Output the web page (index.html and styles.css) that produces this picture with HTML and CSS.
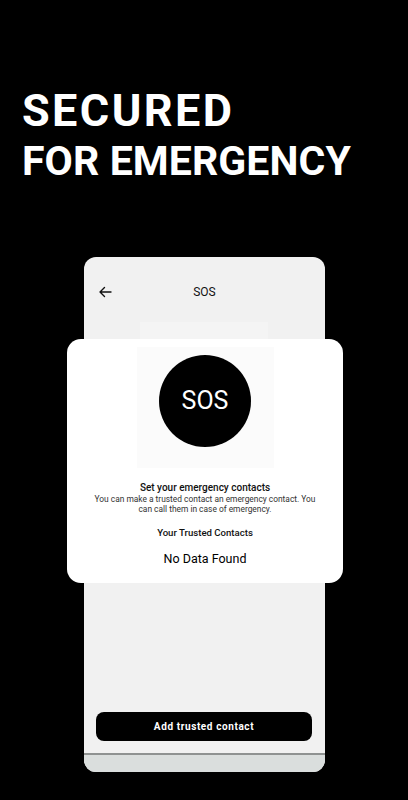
FILE: index.html
```html
<!DOCTYPE html>
<html lang="en">
<head>
    <meta charset="UTF-8">
    <meta name="viewport" content="width=device-width, initial-scale=1.0">
    <title>SOS - Secured for emergency</title>
    <link rel="stylesheet" href="styles.css">
</head>
<body>
    <div class="headline">
        <div class="headline-line big">SECURED</div>
        <div class="headline-line">FOR EMERGENCY</div>
    </div>

    <div class="stage">
        <div class="phone">
            <div class="appbar">
                <svg class="back-icon" width="14" height="12" viewBox="0 0 14 12">
                    <path d="M13 6H2M6.5 1.5L2 6l4.5 4.5" fill="none" stroke="#111" stroke-width="1.4" stroke-linecap="round" stroke-linejoin="round"/>
                </svg>
                <span class="appbar-title">SOS</span>
            </div>
            <div class="placeholder"></div>
            <div class="spacer"></div>
            <button class="add-button">Add trusted contact</button>
            <div class="phone-bottom"></div>
        </div>

        <!-- card zoomed out over the phone -->
        <div class="sos-card">
            <div class="sos-image">
                <div class="sos-circle">SOS</div>
            </div>
            <div class="card-title">Set your emergency contacts</div>
            <div class="card-desc">You can make a trusted contact an emergency contact. You<br>can call them in case of emergency.</div>
            <div class="card-sub">Your Trusted Contacts</div>
            <div class="card-empty">No Data Found</div>
        </div>
    </div>
</body>
</html>
```

FILE: styles.css
```css
body {
    margin: 0;
    padding: 0;
    background-color: #000;
    font-family: Roboto, "Noto Sans", Arial, sans-serif;
    width: 408px;
    height: 800px;
    overflow: hidden;
}
.headline {
    padding: 86px 0 0 22px;
    color: #fff;
    font-family: Roboto, "Noto Sans", sans-serif;
    font-weight: 700;
    font-size: 41px;
    line-height: 50px;
    letter-spacing: 0.1px;
}
.headline-line.big {
    font-size: 45px;
    letter-spacing: 2.4px;
}
.stage {
    position: relative;
    margin-top: 71px;
}
.phone {
    margin-left: 84px;
    width: 241px;
    height: 515px;
    background-color: #f1f1f1;
    border-radius: 12px;
    overflow: hidden;
    display: flex;
    flex-direction: column;
}
.appbar {
    position: relative;
    height: 65px;
    display: flex;
    align-items: flex-start;
    justify-content: center;
    padding-top: 28px;
    box-sizing: border-box;
}
.back-icon {
    position: absolute;
    left: 14px;
    top: 29px;
}
.appbar-title {
    font-size: 12px;
    line-height: 14px;
    color: #111;
}
.placeholder {
    width: 128px;
    height: 130px;
    margin-left: 56px;
    background-color: #f4f4f4;
}
.spacer {
    flex: 1;
}
.add-button {
    margin: 0 13px 12px 12px;
    height: 29px;
    background-color: #000;
    color: #fff;
    border: none;
    border-radius: 8px;
    font-family: Roboto, sans-serif;
    font-weight: 700;
    font-size: 10px;
    letter-spacing: 0.6px;
}
.phone-bottom {
    height: 17px;
    border-top: 2px solid #8f9291;
    background-color: #dadedd;
}
.sos-card {
    position: absolute;
    left: 67px;
    top: 82px;
    width: 276px;
    height: 244px;
    background-color: #fff;
    border-radius: 14px;
    text-align: center;
    color: #111;
}
.sos-image {
    width: 137px;
    height: 121px;
    margin: 8px auto 0;
    background-color: #fbfbfb;
    padding-top: 8px;
    box-sizing: border-box;
}
.sos-circle {
    width: 92px;
    height: 92px;
    margin: 0 auto;
    border-radius: 50%;
    background-color: #000;
    color: #fff;
    font-size: 25px;
    line-height: 92px;
}
.card-title {
    margin-top: 14px;
    font-size: 10px;
    font-weight: 500;
    line-height: 12px;
}
.card-desc {
    font-size: 8.4px;
    line-height: 10px;
    color: #333;
}
.card-sub {
    margin-top: 12px;
    font-size: 9.6px;
    font-weight: 500;
    line-height: 14px;
}
.card-empty {
    margin-top: 11px;
    font-size: 12.5px;
    line-height: 16px;
    color: #000;
}
```
